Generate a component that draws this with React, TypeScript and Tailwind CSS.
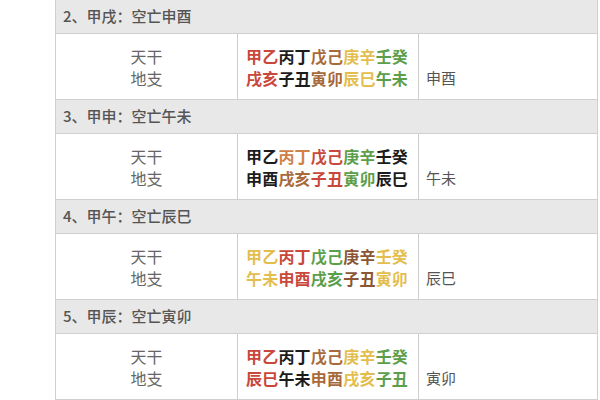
const R = "#c9473b";
const K = "#1c1c1c";
const B = "#a8693b";
const Y = "#e3be4f";
const G = "#5c9e4a";
const O = "#cf8148";
const D = "#8a5634";

type Seg = [string, string];

const groups: {
  title: string;
  gan: Seg[];
  zhi: Seg[];
  kong: string;
}[] = [
  {
    title: "2、甲戌：空亡申酉",
    gan: [["甲乙", R], ["丙丁", K], ["戊己", B], ["庚辛", Y], ["壬癸", G]],
    zhi: [["戌亥", R], ["子丑", K], ["寅卯", B], ["辰巳", Y], ["午未", G]],
    kong: "申酉",
  },
  {
    title: "3、甲申：空亡午未",
    gan: [["甲乙", K], ["丙丁", O], ["戊己", R], ["庚辛", G], ["壬癸", K]],
    zhi: [["申酉", K], ["戌亥", B], ["子丑", R], ["寅卯", G], ["辰巳", K]],
    kong: "午未",
  },
  {
    title: "4、甲午：空亡辰巳",
    gan: [["甲乙", Y], ["丙丁", R], ["戊己", G], ["庚辛", D], ["壬癸", Y]],
    zhi: [["午未", Y], ["申酉", R], ["戌亥", G], ["子丑", D], ["寅卯", Y]],
    kong: "辰巳",
  },
  {
    title: "5、甲辰：空亡寅卯",
    gan: [["甲乙", R], ["丙丁", K], ["戊己", B], ["庚辛", Y], ["壬癸", G]],
    zhi: [["辰巳", R], ["午未", K], ["申酉", B], ["戌亥", Y], ["子丑", G]],
    kong: "寅卯",
  },
];

function Line({ segs }: { segs: Seg[] }) {
  return (
    <div>
      {segs.map(([t, c], i) => (
        <span key={i} style={{ color: c }}>
          {t}
        </span>
      ))}
    </div>
  );
}

export default function App() {
  return (
    <div
      className="w-[600px] h-[400px] overflow-hidden bg-white"
      style={{ fontFamily: '"Noto Sans CJK SC", "Noto Sans", sans-serif' }}
    >
      <div className="ml-[55px] w-[543px] border-l border-r border-[#cfcfcf]">
        {groups.map((g) => (
          <div key={g.title}>
            <div className="h-[34px] bg-[#e8e8e8] border-b border-[#cfcfcf] flex items-center pl-[7px] text-[15px] font-medium text-[#555]">
              {g.title}
            </div>
            <div className="h-[66px] grid grid-cols-[182px_181px_1fr] border-b border-[#cfcfcf] leading-[22px]">
              <div className="border-r border-[#cfcfcf] pt-[11px] text-center text-[16px] text-[#666]">
                <div>天干</div>
                <div>地支</div>
              </div>
              <div className="border-r border-[#cfcfcf] pt-[11px] pl-[8px] text-[16px] font-bold tracking-[0.2px]">
                <Line segs={g.gan} />
                <Line segs={g.zhi} />
              </div>
              <div className="pt-[33px] pl-[7px] text-[15px] text-[#555]">
                {g.kong}
              </div>
            </div>
          </div>
        ))}
      </div>
    </div>
  );
}
